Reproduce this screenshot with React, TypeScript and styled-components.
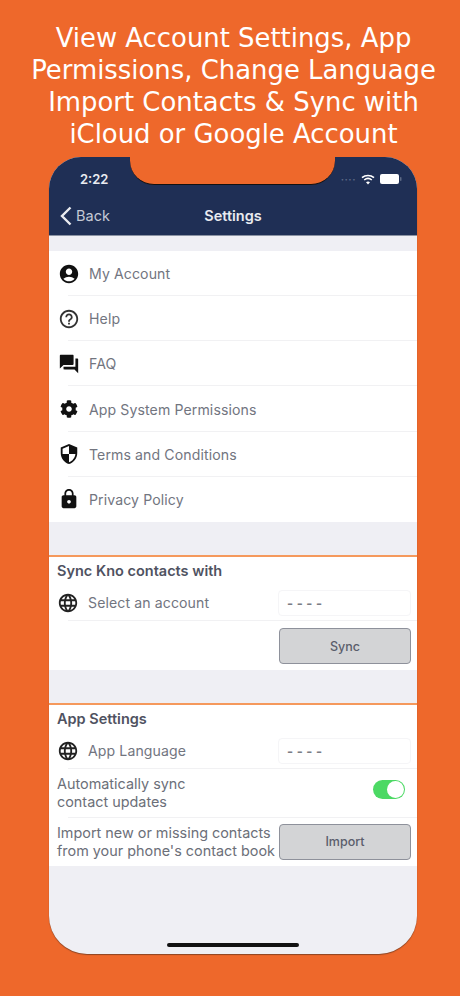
import React from "react";
import styled, { createGlobalStyle } from "styled-components";
import {
  MdAccountCircle,
  MdHelpOutline,
  MdQuestionAnswer,
  MdSecurity,
  MdLock,
  MdLanguage,
} from "react-icons/md";
import { FaCog } from "react-icons/fa";

const GlobalStyle = createGlobalStyle`
  html, body {
    margin: 0;
    padding: 0;
    background: #ee682b;
  }
  * {
    box-sizing: border-box;
  }
`;

const Page = styled.div`
  width: 460px;
  height: 996px;
  background: #ee682b;
  display: flex;
  flex-direction: column;
  align-items: center;
  overflow: hidden;
  padding-top: 22px;
`;

const Headline = styled.h1`
  margin: 0 0 0 7px;
  height: 135px;
  font-family: "DejaVu Sans", sans-serif;
  font-weight: 400;
  font-size: 25.9px;
  line-height: 32px;
  color: #fff;
  text-align: center;
  white-space: nowrap;
`;

const Phone = styled.div`
  position: relative;
  width: 368px;
  height: 797px;
  margin-left: 6px;
  border-radius: 32px 32px 38px 38px;
  background: #efeff4;
  overflow: hidden;
  box-shadow: 0 1px 1px rgba(60, 40, 30, 0.55);
  font-family: "Inter", "Liberation Sans", sans-serif;
  display: flex;
  flex-direction: column;
`;

const Notch = styled.div`
  position: absolute;
  top: -1px;
  left: 81px;
  width: 205px;
  height: 29px;
  background: #ee682b;
  border-radius: 0 0 24px 24px;
  border-bottom: 1px solid #111;
`;

const NavBar = styled.header`
  height: 79px;
  flex: none;
  background: #1f2f55;
  border-bottom: 1px solid #8b93a3;
  color: #e9ebf0;
  display: flex;
  flex-direction: column;
`;

const StatusBar = styled.div`
  height: 42px;
  display: flex;
  align-items: flex-end;
  justify-content: space-between;
  padding: 0 15px 12px 31px;
`;

const Clock = styled.span`
  font-size: 13px;
  font-weight: 600;
  line-height: 16px;
`;

const StatusIcons = styled.div`
  display: flex;
  align-items: center;
  gap: 5px;
  height: 16px;
`;

const Signal = styled.span`
  font-size: 10px;
  letter-spacing: 0.5px;
  color: #5d6a86;
  line-height: 10px;
  font-weight: 700;
`;

const NavRow = styled.div`
  position: relative;
  flex: 1;
  display: flex;
  align-items: center;
  justify-content: center;
  padding-bottom: 4px;
`;

const BackLink = styled.div`
  position: absolute;
  left: 11px;
  top: 7px;
  display: flex;
  align-items: center;
  gap: 4px;
  font-size: 14.5px;
  color: #c5cad6;
  line-height: 20px;
`;

const NavTitle = styled.div`
  font-size: 14.5px;
  font-weight: 600;
`;

const Spacer = styled.div<{ $h: number }>`
  height: ${(p) => p.$h}px;
  flex: none;
`;

const MenuList = styled.div`
  background: #fff;
  display: flex;
  flex-direction: column;
`;

const MenuRow = styled.div`
  height: 45.17px;
  display: flex;
  align-items: center;
  padding-left: 9px;
  gap: 9px;
  position: relative;
  color: #111;

  &:not(:last-child)::after {
    content: "";
    position: absolute;
    left: 19px;
    right: 0;
    bottom: 0;
    height: 1px;
    background: #f1f1f3;
  }
`;

const RowLabel = styled.span`
  font-size: 14.1px;
  color: #72757f;
  letter-spacing: 0.1px;
`;

const Section = styled.section`
  background: #fff;
  border-top: 2px solid #f5995c;
  display: flex;
  flex-direction: column;
`;

const SectionTitle = styled.div`
  height: 28px;
  padding: 5px 0 0 8px;
  font-size: 14.5px;
  font-weight: 600;
  color: #4f5261;
  line-height: 18px;
`;

const FieldRow = styled.div<{ $h: number; $last?: boolean }>`
  height: ${(p) => p.$h}px;
  position: relative;
  display: flex;
  align-items: center;
  justify-content: space-between;
  padding: 0 6px 0 8px;

  &::after {
    content: "";
    display: ${(p) => (p.$last ? "none" : "block")};
    position: absolute;
    left: 19px;
    right: 0;
    bottom: 0;
    height: 1px;
    background: #f1f1f3;
  }
`;

const FieldLabel = styled.div`
  display: flex;
  align-items: center;
  gap: 9px;
  color: #222;
`;

const Field = styled.div`
  width: 133px;
  height: 26px;
  border: 1px solid #f5f5f7;
  border-radius: 4px;
  padding-left: 8px;
  display: flex;
  align-items: center;
  font-size: 13px;
  font-weight: 700;
  letter-spacing: 0.25px;
  color: #7b7d85;
`;

const SmallText = styled.div`
  font-size: 14.4px;
  line-height: 18px;
  color: #6c6f79;
  white-space: nowrap;
`;

const GreyButton = styled.div`
  width: 132px;
  height: 36px;
  background: #d3d4d6;
  border: 1.5px solid #8e919b;
  border-radius: 4px;
  display: flex;
  align-items: center;
  justify-content: center;
  font-size: 12.5px;
  font-weight: 500;
  color: #5a5d6b;
`;

const ButtonRow = styled.div`
  height: 49px;
  display: flex;
  justify-content: flex-end;
  align-items: center;
  padding: 2px 6px 0 0;
`;

const Toggle = styled.div`
  width: 32px;
  height: 19px;
  margin: 0 6px 7px 0;
  border-radius: 10px;
  background: #4cd964;
  display: flex;
  justify-content: flex-end;
  align-items: center;
  padding-right: 1px;
  &::after {
    content: "";
    width: 17px;
    height: 17px;
    border-radius: 50%;
    background: #fff;
  }
`;

const HomeBar = styled.div`
  position: absolute;
  bottom: 7px;
  left: 118px;
  width: 132px;
  height: 4px;
  border-radius: 2px;
  background: #111;
`;

const menuItems = [
  { icon: <MdAccountCircle size={22} />, label: "My Account" },
  { icon: <MdHelpOutline size={22} color="#333" />, label: "Help" },
  { icon: <MdQuestionAnswer size={22} />, label: "FAQ" },
  { icon: <FaCog size={18} style={{ margin: "0 2px" }} />, label: "App System Permissions" },
  { icon: <MdSecurity size={22} />, label: "Terms and Conditions" },
  { icon: <MdLock size={22} />, label: "Privacy Policy" },
];

export default function App() {
  return (
    <Page>
      <GlobalStyle />
      <Headline>
        View Account Settings, App
        <br />
        Permissions, Change Language
        <br />
        Import Contacts &amp; Sync with
        <br />
        iCloud or Google Account
      </Headline>
      <Phone>
        <Notch />
        <NavBar>
          <StatusBar>
            <Clock>2:22</Clock>
            <StatusIcons>
              <Signal>····</Signal>
              <svg width="14" height="11" viewBox="0 0 14 11" fill="none" stroke="#fff" strokeWidth="1.6">
                <path d="M1 3.6C4.4.7 9.6.7 13 3.6" />
                <path d="M3.2 6c2.2-1.8 5.4-1.8 7.6 0" />
                <path d="M7 10.6 5 8.2c1.2-.9 2.8-.9 4 0z" fill="#fff" stroke="none" />
              </svg>
              <svg width="22" height="10" viewBox="0 0 22 10">
                <rect x="0" y="0" width="19" height="10" rx="2" fill="#fff" />
                <rect x="20" y="3" width="1.5" height="4" rx="0.7" fill="#5d6a86" />
              </svg>
            </StatusIcons>
          </StatusBar>
          <NavRow>
            <BackLink>
              <svg width="12" height="20" viewBox="0 0 12 20" fill="none" stroke="#e9ebf0" strokeWidth="2.4">
                <path d="M10.5 1.5 2 10l8.5 8.5" />
              </svg>
              Back
            </BackLink>
            <NavTitle>Settings</NavTitle>
          </NavRow>
        </NavBar>
        <Spacer $h={15} />
        <MenuList>
          {menuItems.map((item) => (
            <MenuRow key={item.label}>
              {item.icon}
              <RowLabel>{item.label}</RowLabel>
            </MenuRow>
          ))}
        </MenuList>
        <Spacer $h={33} />
        <Section>
          <SectionTitle>Sync Kno contacts with</SectionTitle>
          <FieldRow $h={36}>
            <FieldLabel>
              <MdLanguage size={22} />
              <RowLabel>Select an account</RowLabel>
            </FieldLabel>
            <Field>- - - -</Field>
          </FieldRow>
          <ButtonRow>
            <GreyButton>Sync</GreyButton>
          </ButtonRow>
        </Section>
        <Spacer $h={33} />
        <Section>
          <SectionTitle>App Settings</SectionTitle>
          <FieldRow $h={36}>
            <FieldLabel>
              <MdLanguage size={22} />
              <RowLabel>App Language</RowLabel>
            </FieldLabel>
            <Field>- - - -</Field>
          </FieldRow>
          <FieldRow $h={49}>
            <SmallText>
              Automatically sync
              <br />
              contact updates
            </SmallText>
            <Toggle />
          </FieldRow>
          <FieldRow $h={48} $last>
            <SmallText>
              Import new or missing contacts
              <br />
              from your phone's contact book
            </SmallText>
            <GreyButton>Import</GreyButton>
          </FieldRow>
        </Section>
        <HomeBar />
      </Phone>
    </Page>
  );
}
